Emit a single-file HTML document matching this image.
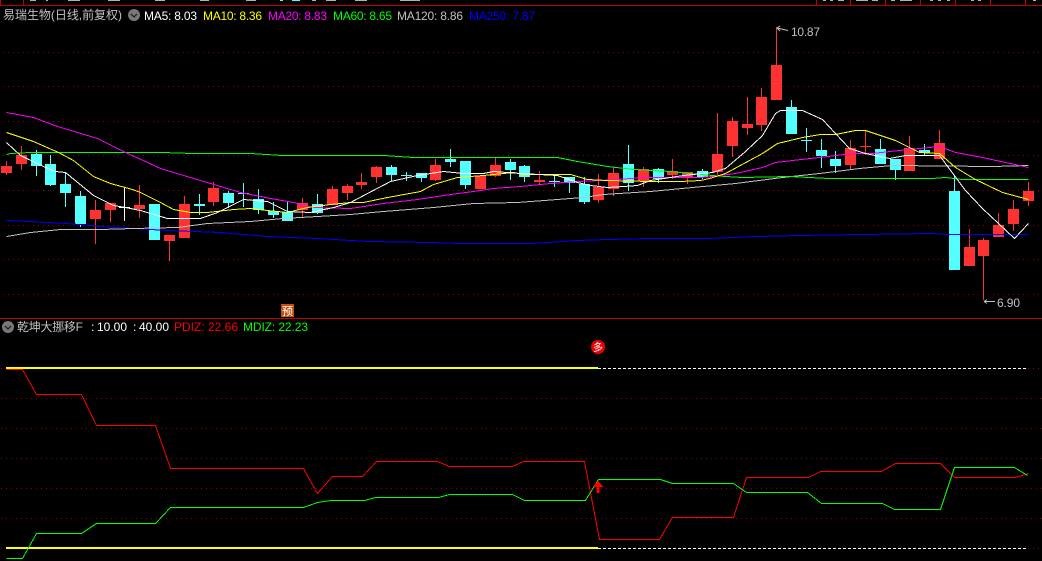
<!DOCTYPE html>
<html><head><meta charset="utf-8"><style>
html,body{margin:0;padding:0;background:#000;width:1042px;height:561px;overflow:hidden}
svg{display:block}
text{font-family:"Liberation Sans","Noto Sans CJK SC",sans-serif;font-size:12px}
</style></head><body>
<svg width="1042" height="561" viewBox="0 0 1042 561" xmlns="http://www.w3.org/2000/svg">
<rect width="1042" height="561" fill="#000"/>
<g stroke="#900000" stroke-width="1" stroke-dasharray="1 4" shape-rendering="crispEdges">
<path d="M3 52.5H1042M3 86.5H1042M3 121.5H1042M3 155.5H1042M3 190.5H1042M3 225.5H1042M3 259.5H1042M3 294.5H1042"/>
<path d="M1 368.5H6M1 398.5H1042M1 428.5H1042M1 458.5H1042M1 488.5H1042M1 518.5H1042M1 548.5H6M1028 368.5H1042M1028 548.5H1042"/>
</g>
<path fill="#c00000" shape-rendering="crispEdges" d="M0 5h1042v1H0zM0 318h1042v1H0zM0 0h1v5H0zM23 0h1v5h-1zM816 0h1v5h-1zM850 0h1v5h-1zM885 0h1v5h-1zM920 0h1v5h-1zM955 0h1v5h-1zM990 0h1v5h-1zM1025 0h1v5h-1z"/>
<path fill="#b0b0b0" shape-rendering="crispEdges" d="M30 0h6v1h-6zM46 0h2v1h-2zM68 0h12v1H68zM108 0h12v1h-12zM155 0h10v1h-10zM200 0h9v1h-9zM246 0h10v1h-10zM312 0h4v1h-4zM326 0h10v1h-10zM355 0h12v1h-12zM400 0h20v1h-20zM823 0h3v1h-3zM830 0h3v1h-3zM838 0h6v1h-6zM856 0h12v1h-12zM872 0h6v1h-6zM891 0h4v1h-4zM900 0h12v1h-12zM930 0h3v1h-3zM938 0h3v1h-3zM947 0h3v1h-3zM971 0h3v1h-3zM978 0h3v1h-3zM1033 0h3v1h-3z"/>
<path fill="#54ffff" shape-rendering="crispEdges" d="M280 0h3v1h-3zM292 0h8v1h-8z"/>
<!-- red candles -->
<path fill="#ff3232" shape-rendering="crispEdges" d="M1 166h11v7H1zM6 161h1v14H6zM16 155h11v9H16zM21 146h1v24h-1zM90 210h11v9H90zM95 200h1v44h-1zM105 203h11v7h-11zM110 203h1v19h-1zM134 205h11v4h-11zM139 185h1v33h-1zM164 235h11v6h-11zM169 235h1v26h-1zM179 204h11v34h-11zM184 196h1v42h-1zM208 188h11v14h-11zM213 182h1v24h-1zM297 203h11v7h-11zM302 198h1v19h-1zM327 189h11v16h-11zM332 186h1v19h-1zM342 186h11v7h-11zM347 184h1v16h-1zM356 182h11v3h-11zM361 173h1v16h-1zM371 167h11v10h-11zM376 166h1v17h-1zM430 165h11v15h-11zM435 159h1v22h-1zM475 176h11v13h-11zM490 165h11v11h-11zM495 157h1v20h-1zM534 180h11v2h-11zM539 171h1v14h-1zM593 187h11v13h-11zM598 174h1v29h-1zM608 173h11v16h-11zM613 167h1v29h-1zM638 169h11v12h-11zM643 167h1v20h-1zM667 171h11v4h-11zM672 159h1v20h-1zM682 172h11v5h-11zM687 172h1v12h-1zM712 154h11v18h-11zM717 113h1v62h-1zM727 121h11v25h-11zM732 117h1v40h-1zM742 124h11v4h-11zM747 97h1v38h-1zM756 97h11v28h-11zM761 88h1v43h-1zM771 65h11v35h-11zM776 27h1v73h-1zM845 148h11v17h-11zM850 140h1v30h-1zM860 146h11v1h-11zM865 130h1v25h-1zM904 148h11v23h-11zM909 136h1v35h-1zM934 143h11v16h-11zM939 130h1v29h-1zM964 247h11v19h-11zM969 229h1v37h-1zM978 240h11v16h-11zM983 238h1v62h-1zM993 225h11v12h-11zM998 213h1v24h-1zM1008 209h11v15h-11zM1013 200h1v31h-1zM1023 191h11v10h-11zM1028 182h1v24h-1z"/>
<!-- cyan candles -->
<path fill="#54ffff" shape-rendering="crispEdges" d="M31 154h11v12H31zM36 150h1v26h-1zM45 164h11v21H45zM50 155h1v31h-1zM60 184h11v9H60zM65 173h1v34h-1zM75 196h11v28H75zM80 191h1v36h-1zM149 204h11v36h-11zM194 204h11v2h-11zM199 194h1v21h-1zM223 193h11v10h-11zM228 191h1v17h-1zM238 193h11v1h-11zM243 183h1v24h-1zM253 199h11v11h-11zM258 189h1v25h-1zM268 211h11v4h-11zM273 202h1v16h-1zM282 212h11v9h-11zM287 202h1v19h-1zM312 204h11v9h-11zM317 194h1v20h-1zM386 167h11v8h-11zM391 165h1v16h-1zM401 175h11v1h-11zM406 172h1v9h-1zM416 173h11v5h-11zM421 173h1v9h-1zM445 159h11v3h-11zM450 149h1v18h-1zM460 161h11v24h-11zM465 161h1v28h-1zM505 162h11v8h-11zM510 159h1v21h-1zM519 166h11v11h-11zM524 165h1v17h-1zM549 181h11v1h-11zM554 176h1v11h-1zM564 177h11v6h-11zM569 177h1v16h-1zM579 184h11v18h-11zM584 177h1v27h-1zM623 164h11v19h-11zM628 145h1v46h-1zM653 169h11v10h-11zM658 168h1v15h-1zM697 171h11v6h-11zM702 169h1v10h-1zM786 107h11v27h-11zM791 100h1v34h-1zM801 140h11v1h-11zM806 128h1v24h-1zM816 150h11v6h-11zM821 139h1v29h-1zM830 159h11v7h-11zM835 151h1v22h-1zM875 149h11v15h-11zM880 139h1v25h-1zM890 159h11v11h-11zM895 159h1v21h-1zM919 150h11v3h-11zM924 144h1v11h-1zM949 191h11v79h-11zM954 176h1v94h-1z"/>
<path fill="#fff" shape-rendering="crispEdges" d="M124 188h1v33h-1zM119 207h11v1h-11z"/>
<!-- MA lines -->
<g fill="none" stroke-width="1" shape-rendering="crispEdges" transform="translate(.5 .5)">
<polyline stroke="#0000ff" points="6,220 30,221 67,223 100,226 133,228 167,230 220,232 267,236 317,238 350,240 370,241 430,242 460,243 530,243 563,241 577,240 607,239 650,238 709,238 755,236 799,235 859,234 932,233 949,234 1028,234"/>
<polyline stroke="#c0c0c0" points="6,236 30,232 60,229 100,229 133,228 177,227 207,223 250,221 283,218 317,216 350,214 383,211 433,207 473,203 517,202 557,199 583,197 603,194 650,191 692,187 735,183 782,177 819,173 859,168 892,165 992,166 1028,165"/>
<polyline stroke="#00ff00" points="6,154 10,153 30,152 117,152 162,152 192,153 250,153 282,155 383,155 413,157 557,157 577,161 607,166 633,169 670,171 700,174 725,176 742,177 789,176 829,178 932,178 945,177 962,179 1028,179"/>
<polyline stroke="#ff00ff" points="6,112 33,117 57,126 97,138 123,151 160,168 200,180 240,192 270,198 293,202 313,207 350,208 383,203 417,199 450,194 473,191 493,188 520,186 550,183 577,181 600,180 617,179 643,177 700,177 712,176 735,173 762,167 775,162 792,160 819,157 852,153 872,153 899,150 939,146 955,152 982,157 1028,167"/>
<polyline stroke="#ffff00" points="6,132 33,141 58,152 73,160 93,176 110,183 132,189 140,192 160,202 173,209 190,212 207,212 233,209 250,208 267,210 287,212 307,207 330,204 350,202 363,202 387,197 420,191 433,184 457,177 483,175 513,172 523,174 570,174 587,179 607,180 650,181 680,181 700,180 709,178 725,173 762,153 777,143 802,137 820,134 835,134 855,130 865,130 895,140 919,152 939,153 955,167 975,179 1002,192 1028,199"/>
<polyline stroke="#ffffff" points="6,142 20,155 43,166 55,171 65,172 87,190 93,195 113,205 125,207 140,210 167,218 200,218 217,212 243,199 267,201 287,211 310,212 333,207 350,202 367,193 390,181 417,175 443,171 463,173 483,173 493,171 520,173 557,175 577,182 590,185 607,187 623,186 637,185 650,180 683,175 712,172 725,168 745,151 762,135 775,113 780,110 802,110 822,119 835,133 849,148 865,153 889,158 905,155 939,155 965,190 982,208 1014,238 1028,223"/>
</g>
<!-- high/low labels -->
<g stroke="#c0c0c0" fill="none" stroke-width="1">
<path d="M777 28L788 30.5M777 28l3-2M777 28l3 3"/>
<path d="M984 301.500H995M984 301.500l3-2M984 301.500l3 2"/>
</g>
<text x="791" y="36" fill="#c0c0c0" textLength="29">10.87</text>
<text x="997" y="307" fill="#c0c0c0" textLength="23">6.90</text>
<!-- 预 icon -->
<rect x="281" y="304" width="13" height="13" fill="#c0500f"/>
<text x="282" y="315" fill="#fff" style="font-size:11px">预</text>
<!-- header -->
<text x="3" y="19" fill="#c0c0c0" textLength="119">易瑞生物(日线,前复权)</text>
<circle cx="134" cy="15" r="6" fill="#787878"/>
<path d="M131 14l3 3 3-3" stroke="#222" stroke-width="1.300" fill="none"/>
<text x="144" y="20" fill="#ffffff" textLength="53">MA5: 8.03</text>
<text x="203" y="20" fill="#ffff00" textLength="59">MA10: 8.36</text>
<text x="268" y="20" fill="#ff00ff" textLength="59">MA20: 8.83</text>
<text x="333" y="20" fill="#00ff00" textLength="59">MA60: 8.65</text>
<text x="397" y="20" fill="#c0c0c0" textLength="66">MA120: 8.86</text>
<text x="469" y="20" fill="#0000ff" textLength="66">MA250: 7.87</text>
<!-- lower legend -->
<circle cx="8" cy="327" r="6" fill="#787878"/>
<path d="M5 326l3 3 3-3" stroke="#222" stroke-width="1.300" fill="none"/>
<text x="17" y="331" fill="#c0c0c0" textLength="66">乾坤大挪移F</text>
<text x="91" y="331" fill="#ffffff">:</text>
<text x="97" y="331" fill="#ffffff" textLength="30">10.00</text>
<text x="133" y="331" fill="#ffffff">:</text>
<text x="139" y="331" fill="#ffffff" textLength="30">40.00</text>
<text x="174" y="331" fill="#ff0000" textLength="64">PDIZ: 22.66</text>
<text x="243" y="331" fill="#00ff00" textLength="65">MDIZ: 22.23</text>
<!-- 多 -->
<circle cx="598" cy="347" r="7" fill="#ee0000"/>
<text x="593" y="351" fill="#fff" style="font-size:10px">多</text>
<!-- lower panel -->
<path fill="#ffff00" shape-rendering="crispEdges" d="M6 367h592v2H6zM6 547h592v2H6z"/>
<g stroke="#ffffff" stroke-dasharray="3 2" shape-rendering="crispEdges"><path d="M598 368.500H1028M598 548.500H1028"/></g>
<g fill="none" stroke-width="1" shape-rendering="crispEdges" transform="translate(.5 .5)">
<polyline stroke="#ff0000" points="6,369 22,369 36,394 81,394 96,425 155,425 170,468 303,468 317,493 332,476 362,476 376,461 437,461 449,466 512,466 523,461 584,461 599,539 659,539 672,517 733,517 746,477 808,477 820,471 881,471 895,463 940,463 954,477 1015,477 1028,473"/>
<polyline stroke="#00ff00" points="6,558 22,558 36,533 81,533 96,523 155,523 170,507 303,507 317,502 330,500 364,500 375,497 438,497 449,494 512,494 524,500 585,500 598,479 660,479 672,483 733,483 746,492 807,492 821,503 882,503 894,509 940,509 954,467 1014,467 1027,475"/>
</g>
<path fill="#ff0000" d="M598 481l5.500 6h-4v6h-3v-6h-4z"/>
</svg>
</body></html>
